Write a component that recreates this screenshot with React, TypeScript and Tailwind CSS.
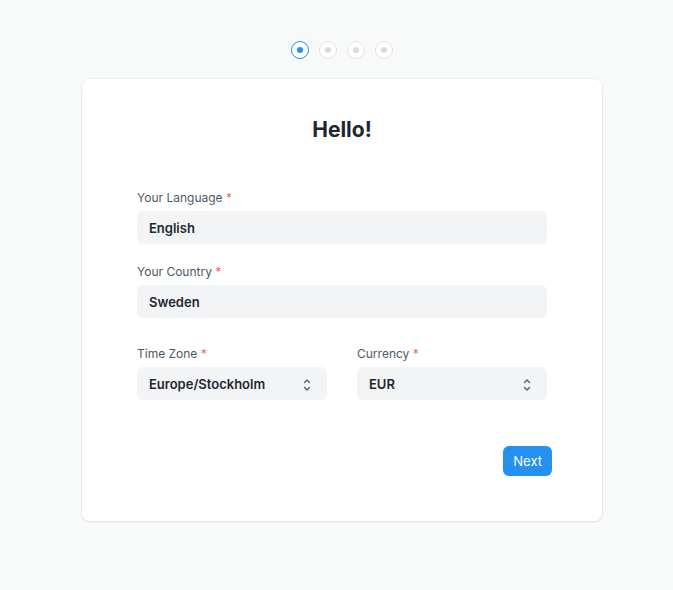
import React from "react";

const FONT = { fontFamily: "Inter, 'Noto Sans', sans-serif" };

function Chevrons() {
  return (
    <svg width="10" height="16" viewBox="0 0 10 16" fill="none" stroke="#525b63" strokeWidth="1.3" strokeLinecap="round" strokeLinejoin="round">
      <path d="M2.5 5.5 5 3l2.5 2.5" />
      <path d="M2.5 10.5 5 13l2.5-2.5" />
    </svg>
  );
}

function Label({ children }: { children: React.ReactNode }) {
  return (
    <label className="block h-4 text-xs leading-[18px] text-[#4c5a67]">
      {children} <span className="text-[#f06a6a]">*</span>
    </label>
  );
}

function Field({ label, value, select }: { label: string; value: string; select?: boolean }) {
  return (
    <div className="flex flex-col gap-[6px]">
      <Label>{label}</Label>
      <div className="flex h-[33px] items-center justify-between rounded-md bg-[#f3f4f5] pl-3 pr-[15px] pt-[2px] text-[13px] font-semibold text-[#1f272e]">
        <span>{value}</span>
        {select && <Chevrons />}
      </div>
    </div>
  );
}

function Step({ active }: { active?: boolean }) {
  return (
    <div
      className={
        active
          ? "flex size-[18px] items-center justify-center rounded-full border border-[#2490ef] bg-white"
          : "flex size-[18px] items-center justify-center rounded-full border border-[#dfe2e5] bg-white"
      }
    >
      <div className={active ? "size-[6px] rounded-full bg-[#2490ef]" : "size-[6px] rounded-full bg-[#d8dbde]"} />
    </div>
  );
}

export default function App() {
  return (
    <div style={FONT} className="min-h-[590px] w-full bg-[#f8f9f9] pl-[11px]">
      <div className="flex flex-col items-center pt-[41px]">
        <div className="flex gap-[10px]">
          <Step active />
          <Step />
          <Step />
          <Step />
        </div>

        <div className="mt-[20px] w-[520px] rounded-lg bg-white pb-[45px] pt-[37px] shadow-[0_0_0_1px_rgba(0,0,0,0.03),0_1px_3px_rgba(0,0,0,0.08)]">
          <h1 className="text-center text-[21px] font-bold leading-7 text-[#1f272e]">Hello!</h1>

          <div className="mt-[45px] flex flex-col px-[55px]">
            <Field label="Your Language" value="English" />
            <div className="mt-[19px]">
              <Field label="Your Country" value="Sweden" />
            </div>
            <div className="mt-[27px] grid grid-cols-2 gap-[30px]">
              <Field label="Time Zone" value="Europe/Stockholm" select />
              <Field label="Currency" value="EUR" select />
            </div>
          </div>

          <div className="mt-[46px] flex justify-end px-[50px]">
            <button
              type="button"
              className="h-[30px] rounded-md bg-[#2490ef] px-[10px] pt-px text-[13px] text-white"
            >
              Next
            </button>
          </div>
        </div>
      </div>
    </div>
  );
}
